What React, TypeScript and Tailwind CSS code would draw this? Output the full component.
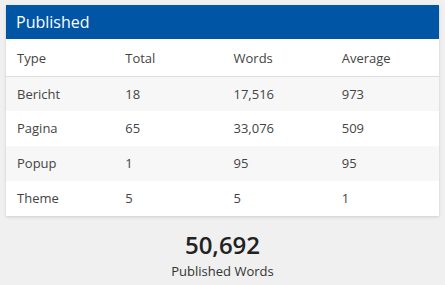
const rows = [
  { type: "Bericht", total: "18", words: "17,516", avg: "973" },
  { type: "Pagina", total: "65", words: "33,076", avg: "509" },
  { type: "Popup", total: "1", words: "95", avg: "95" },
  { type: "Theme", total: "5", words: "5", avg: "1" },
];

export default function App() {
  return (
    <div
      className="w-[445px] h-[285px] bg-[#f0f0f0] px-[6px] pt-[5px] overflow-hidden"
      style={{ fontFamily: '"Open Sans", "Noto Sans", sans-serif' }}
    >
      <div className="bg-white shadow-[0_1px_3px_rgba(0,0,0,0.15)]">
        <div className="h-[34px] bg-[#0055a5] px-[10px] flex items-center text-white text-[16px]">
          Published
        </div>
        <table className="w-full text-[13px] text-[#444] table-fixed">
          <thead>
            <tr className="h-[37px] border-b border-[#dedede]">
              <th className="text-left font-normal pl-[11px] pt-[2px]">Type</th>
              <th className="text-left font-normal pl-[11px] pt-[2px]">Total</th>
              <th className="text-left font-normal pl-[11px] pt-[2px]">Words</th>
              <th className="text-left font-normal pl-[11px] pt-[2px]">Average</th>
            </tr>
          </thead>
          <tbody>
            {rows.map((r, i) => (
              <tr key={r.type} className={`h-[35px] ${i % 2 === 0 ? "bg-[#f7f7f7]" : "bg-white"}`}>
                <td className="pl-[11px] pt-[1px]">{r.type}</td>
                <td className="pl-[11px] pt-[1px]">{r.total}</td>
                <td className="pl-[11px] pt-[1px]">{r.words}</td>
                <td className="pl-[11px] pt-[1px]">{r.avg}</td>
              </tr>
            ))}
          </tbody>
        </table>
      </div>
      <div className="flex flex-col items-center pt-[14px]">
        <div className="text-[24px] leading-[30px] text-[#222] font-semibold">50,692</div>
        <div className="text-[13px] leading-[20px] text-[#333] mt-[1px]">Published Words</div>
      </div>
    </div>
  );
}
